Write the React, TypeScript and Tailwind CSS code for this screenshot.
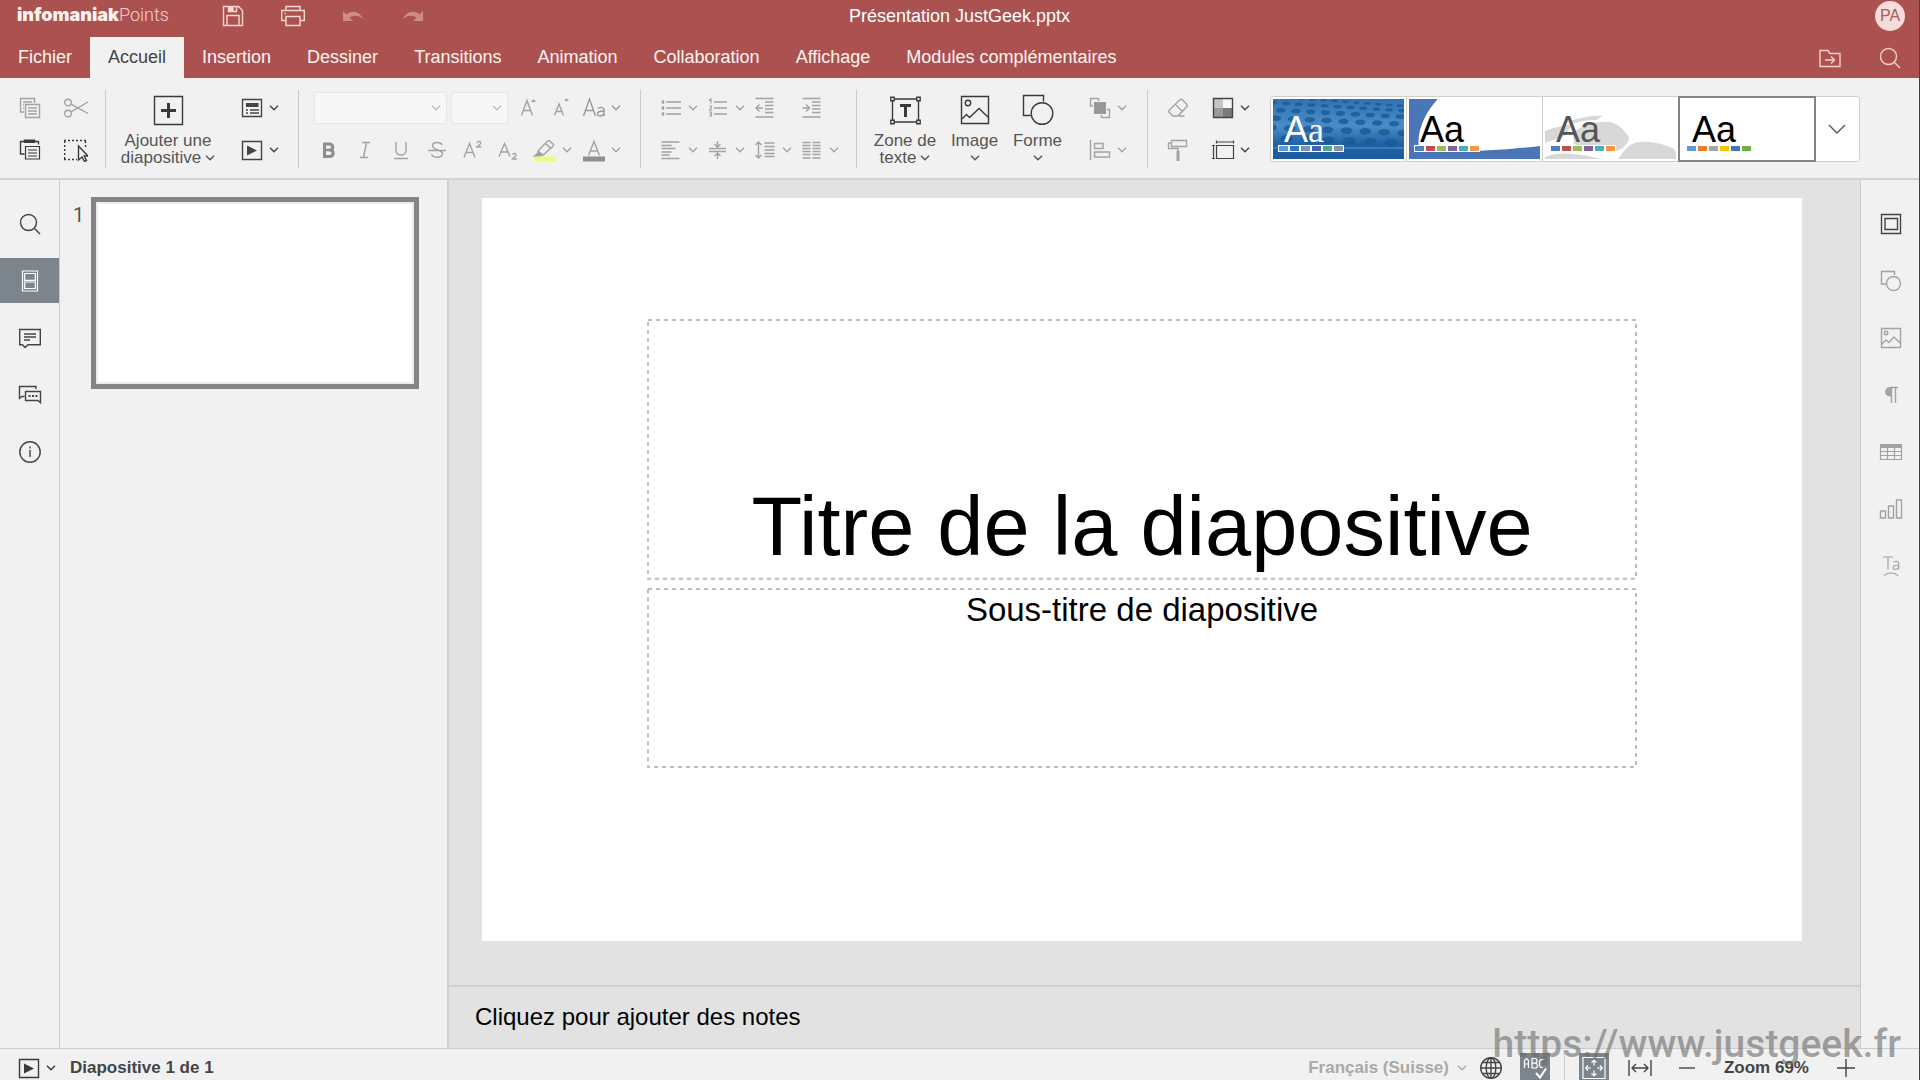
import React from "react";

type IconProps = { size?: number; className?: string; children: React.ReactNode };

function Icon({ size = 24, className = "", children }: IconProps) {
  return (
    <svg
      width={size}
      height={size}
      viewBox={`0 0 ${size} ${size}`}
      fill="none"
      stroke="currentColor"
      strokeWidth="1.4"
      className={`shrink-0 ${className}`}
      aria-hidden="true"
    >
      {children}
    </svg>
  );
}

function Chevron({ className = "" }: { className?: string }) {
  return (
    <svg width="10" height="6" viewBox="0 0 10 6" fill="none" stroke="currentColor" strokeWidth="1.4" className={`shrink-0 ${className}`} aria-hidden="true">
      <path d="M1 .8 5 4.8 9 .8" />
    </svg>
  );
}

const dark = "text-[#444444]";
const dim = "text-[#a3a3a3]";

function Drop({ label, tone = dim, arrow = true, children }: { label: string; tone?: string; arrow?: boolean; children: React.ReactNode }) {
  return (
    <button aria-label={label} className={`flex h-8 w-[39px] shrink-0 items-center gap-[5px] ${tone}`}>
      {children}
      {arrow && <Chevron />}
    </button>
  );
}

function Tool({ label, className, children }: { label: string; className: string; children: React.ReactNode }) {
  return (
    <button aria-label={label} className={`flex h-8 shrink-0 items-center justify-center ${className}`}>
      {children}
    </button>
  );
}

function Separator({ className = "" }: { className?: string }) {
  return <div className={`h-[78px] w-px shrink-0 bg-[#cbcbcb] ${className}`} />;
}

/* ---------- icons ---------- */

const PlayIcon = () => (
  <Icon>
    <path d="M2.5 3.5h19v18h-19z" />
    <path d="M7 7.5v10l10-5z" fill="currentColor" stroke="none" />
  </Icon>
);

const ShapeSmall = () => (
  <Icon>
    <path d="M8 15H2.5V2.500h13v3.500" />
    <circle cx="14.500" cy="14.500" r="7" />
  </Icon>
);

const SearchIcon = () => (
  <Icon>
    <circle cx="10.500" cy="10.500" r="8" />
    <path d="m16.500 16.500 5.500 5.500" />
  </Icon>
);

/* ---------- header ---------- */

const tabs = ["Fichier", "Accueil", "Insertion", "Dessiner", "Transitions", "Animation", "Collaboration", "Affichage", "Modules complémentaires"];

function Header() {
  return (
    <header className="bg-[#ab5251] text-white">
      <div className="grid h-[37px] grid-cols-[1fr_auto_1fr] items-start">
        <div className="flex">
          <div className="flex w-[203px] items-baseline pl-[17px] pt-[2px] leading-[25px]">
            <span className="font-[Inter,sans-serif] text-[18px] font-black text-[#fff3f0]">infomaniak</span>
            <span className="font-[Roboto,sans-serif] text-[18px] font-light text-[#f3cfcb]">Points</span>
          </div>
          <div className="flex text-[#f8d8d2]">
            <Tool label="Enregistrer" className="w-[60px]">
              <Icon>
                <path d="M2.500 2.500h15l4 4v15h-19z" />
                <path d="M6 21v-9.500h12V21M7.500 3v4.500h8V3" />
                <path d="M8 3h4v4H8z" fill="currentColor" />
              </Icon>
            </Tool>
            <Tool label="Imprimer" className="w-[60px]">
              <Icon>
                <path d="M5 16.500H.700v-10h22.600v10H19M5 6V2.500h14V6M5 12.500h14v9H5zM3.500 9.500H5" />
              </Icon>
            </Tool>
            <Tool label="Annuler" className="w-[60px] text-[#cf8b86]">
              <Icon>
                <path d="M2 7v10h10l-3.500-3.200c3.500-3 8.500-3 13.500 1.200-3-7.500-11.500-9.500-16.500-4.500z" fill="currentColor" stroke="none" />
              </Icon>
            </Tool>
            <Tool label="Rétablir" className="w-[60px] text-[#cf8b86]">
              <Icon>
                <path d="M22 7v10H12l3.500-3.200c-3.500-3-8.500-3-13.500 1.200 3-7.500 11.500-9.500 16.500-4.500z" fill="currentColor" stroke="none" />
              </Icon>
            </Tool>
          </div>
        </div>
        <h1 className="text-[18px] leading-8">Présentation JustGeek.pptx</h1>
        <div className="flex justify-end pr-[14px] pt-px">
          <button aria-label="Profil PA" className="flex size-[30px] items-center justify-center rounded-full bg-[#f6dcda] text-[16px] text-[#a55c5b]">
            PA
          </button>
        </div>
      </div>
      <div className="flex h-[41px] items-stretch justify-between">
        <nav className="flex" aria-label="Onglets">
          {tabs.map((t) => (
            <button
              key={t}
              className={t === "Accueil" ? "bg-[#f1f1f1] px-[18px] text-[18px] text-[#444444]" : "px-[18px] text-[18px] text-[#fff3f0]"}
            >
              {t}
            </button>
          ))}
        </nav>
        <div className="flex items-center gap-9 pr-[17px] text-[#f6cfc9]">
          <button aria-label="Ouvrir l'emplacement du fichier">
            <Icon>
              <path d="M2 4.500h8l2 3h10v13H2zM7 14h9.500M13 10.500l3.500 3.500-3.500 3.500" />
            </Icon>
          </button>
          <button aria-label="Rechercher">
            <SearchIcon />
          </button>
        </div>
      </div>
    </header>
  );
}

/* ---------- theme gallery ---------- */

function Swatches({ colors }: { colors: string[] }) {
  return (
    <div className="flex gap-0.5 bg-white p-px">
      {colors.map((c, i) => (
        <span key={i} className="h-[5px] w-[9px]" style={{ backgroundColor: c }} />
      ))}
    </div>
  );
}

const office = ["#4f7fc0", "#c0504d", "#9bbb59", "#8064a2", "#4bacc6", "#f79646"];

const dots: { x: number; y: number; rx: number; ry: number }[] = [];
for (let r = 0; r < 6; r++) {
  for (let c = 0; c < 12; c++) {
    const spread = 11 + r * 2;
    dots.push({
      x: 62 + (c - 5) * spread + r * 3,
      y: 2 + r * 5 + r * r * 0.6 + (c - 5) * 0.8,
      rx: 3.4 + r * 0.6,
      ry: 1.3 + r * 0.5,
    });
  }
}

const themes = [
  {
    name: "Points bleus",
    letter: "text-white",
    serif: true,
    colors: ["#5b9bd5", "#2e75c6", "#7f93ad", "#4a5fa8", "#4fa58f", "#8f8fa3"],
    art: (
      <>
        <defs>
          <linearGradient id="blue" x1="0" y1="0" x2="0" y2="1">
            <stop offset="0" stopColor="#2f73b3" />
            <stop offset=".45" stopColor="#4a8cc7" />
            <stop offset=".75" stopColor="#1d62a6" />
            <stop offset="1" stopColor="#1d5c9c" />
          </linearGradient>
        </defs>
        <path d="M0 0h132v60H0z" fill="url(#blue)" />
        {dots.map((d, i) => (
          <ellipse key={i} cx={d.x} cy={d.y} rx={d.rx} ry={d.ry} fill="#1b5896" opacity=".8" />
        ))}
        <path d="M0 49h132" stroke="#5f97cc" />
      </>
    ),
  },
  {
    name: "Vague bleue",
    letter: "text-black",
    serif: false,
    colors: office,
    art: (
      <>
        <path d="M0 0h132v60H0z" fill="#fff" />
        <path d="M0 0h29C18 12 7 30 10 51 40 54 90 52 132 47v13H0z" fill="#4a76b8" />
      </>
    ),
  },
  {
    name: "Galets gris",
    letter: "text-[#555555]",
    serif: false,
    colors: office,
    art: (
      <>
        <path d="M0 0h132v60H0z" fill="#fff" />
        <path d="M0 32c10-4 20-6 28-7l-8 12L0 44zM25 22c12-4 26-6 33-5l-6 4c-10 0-18 2-26 4zM28 34c10-8 22-12 38-11 8 2 14 8 19 16-2 8-8 12-16 14-18 0-30-4-40-8zM75 58c6-8 10-14 20-15 12-1 26 2 35 7 3 3 2 7 2 10H74zM0 58c12-6 36-4 56 2H0z" fill="#d8d8d8" />
      </>
    ),
  },
  {
    name: "Blanc",
    letter: "text-black",
    serif: false,
    colors: ["#5b9bd5", "#ed7d31", "#a5a5a5", "#ffc000", "#4472c4", "#70ad47"],
    art: <path d="M0 0h132v60H0z" fill="#fff" />,
  },
];

function Gallery() {
  return (
    <div className="ml-5 flex h-[66px] shrink-0 rounded-[3px] border border-[#cfcfcf] bg-white">
      {themes.map((t, i) => (
        <button
          key={t.name}
          aria-label={t.name}
          className={i === 3 ? "relative h-16 w-[136px] outline-2 -outline-offset-1 outline-[#848484]" : "relative h-16 w-[136px] border-r border-[#cfcfcf]"}
        >
          <svg viewBox="0 0 132 60" preserveAspectRatio="none" className="absolute inset-0.5 h-[60px] w-[131px]" aria-hidden="true">
            {t.art}
          </svg>
          <span className={`absolute left-[13px] top-[15px] text-[36px] leading-9 ${t.letter}`}>
            A{t.serif ? <span className="font-['Liberation_Serif',serif]">a</span> : "a"}
          </span>
          <span className="absolute left-[7px] top-12">
            <Swatches colors={t.colors} />
          </span>
        </button>
      ))}
      <button aria-label="Plus de thèmes" className="flex w-[44px] items-center justify-center text-[#555555]">
        <Icon size={18}>
          <path d="m1 5 8 8 8-8" />
        </Icon>
      </button>
    </div>
  );
}

/* ---------- toolbar ---------- */

function BigButton({ icon, first, second, className }: { icon: React.ReactNode; first: string; second?: string; className: string }) {
  return (
    <button className={`flex shrink-0 flex-col items-center pt-1 text-[17px] leading-[17px] text-[#555555] ${className}`}>
      <span className="mb-1.5 text-[#3a3a3a]">{icon}</span>
      <span className="whitespace-nowrap">{first}</span>
      <span className="flex h-[17px] items-center gap-1 whitespace-nowrap">
        {second}
        <Chevron />
      </span>
    </button>
  );
}

function Combo({ label, className }: { label: string; className: string }) {
  return (
    <span className={`relative flex h-8 items-center ${className}`}>
      <select aria-label={label} disabled className="size-full appearance-none rounded-[2px] border border-[#e6e6e6] bg-[#f7f7f7]">
        <option></option>
      </select>
      <Chevron className="pointer-events-none absolute right-1.5 text-[#bdbdbd]" />
    </span>
  );
}

function Toolbar() {
  return (
    <div className="flex h-[102px] shrink-0 overflow-hidden border-b-2 border-[#d3d3d3] bg-[#f1f1f1] pt-3" role="toolbar" aria-label="Accueil">
      <div className="grid shrink-0 grid-cols-[46px_46px] content-start gap-y-2.5 pl-[7px] pt-[2px]">
        <Tool label="Copier" className={dim}>
          <Icon>
            <path d="M6 16H2.500V2.500h14V7M5 6h9M5 9h1M5 12h1" />
            <path d="M7.500 8.500h14v13h-14zM10 12h9M10 15h9M10 18h9" />
          </Icon>
        </Tool>
        <Tool label="Couper" className={dim}>
          <Icon>
            <circle cx="4" cy="6.500" r="3.300" />
            <circle cx="4" cy="17.500" r="3.300" />
            <path d="m7 8.200 17 9.300M7 15.800 24 6" />
          </Icon>
        </Tool>
        <Tool label="Coller" className="text-[#3a3a3a]">
          <Icon>
            <path d="M6.500 16h-4V3.500H20.500V6.500" />
            <path d="M6.500 2.200h10v2h-10z" fill="currentColor" />
            <path d="M7.500 8.500h14v12.500h-14zM10 12h9M10 15h9M10 18h9" strokeWidth="1.200" />
          </Icon>
        </Tool>
        <Tool label="Tout sélectionner" className="text-[#3a3a3a]">
          <Icon>
            <path d="M0 2.500h22M0 21.500h13M.700 3v18M21.500 3v6" strokeDasharray="2 2" />
            <path d="M14.500 8v14l3.500-3 2.500 4.500 2-1-2.300-4.500H24z" fill="#f1f1f1" />
          </Icon>
        </Tool>
      </div>
      <Separator className="ml-1.5" />

      <BigButton
        className="ml-1.5 w-[112px]"
        first="Ajouter une"
        second="diapositive"
        icon={
          <Icon size={32}>
            <path d="M2.500 2.500h28v28h-28z" />
            <path d="M16.500 9v15M9 16.500h15" strokeWidth="3" />
          </Icon>
        }
      />
      <div className="ml-4 flex shrink-0 flex-col gap-2.5 pt-[2px]">
        <Drop label="Disposition" tone={dark}>
          <Icon>
            <path d="M2.500 3.500h19v17h-19zM6 14h2M10 14h9M6 17h2M10 17h9" />
            <path d="M6 7h12.500v4H6z" fill="currentColor" stroke="none" />
          </Icon>
        </Drop>
        <Drop label="Démarrer le diaporama" tone={dark}>
          <PlayIcon />
        </Drop>
      </div>
      <Separator className="ml-[19px]" />

      <div className={`ml-3 flex shrink-0 flex-col gap-2.5 pt-[2px] ${dim}`}>
        <div className="flex pl-[3px]">
          <Combo label="Police" className="w-[133px]" />
          <Combo label="Taille de police" className="ml-1 mr-[5px] w-[57px]" />
          <Tool label="Augmenter la taille" className="w-8">
            <Icon>
              <path d="m4.500 19.500 5.500-15 5.500 15M6.200 14.500h7.500" />
              <path d="m14 6 2.500-3L19 6z" fill="currentColor" stroke="none" />
            </Icon>
          </Tool>
          <Tool label="Réduire la taille" className="w-8">
            <Icon>
              <path d="m5.500 19.500 4.500-11.500 4.500 11.500M7 15.500h6" />
              <path d="m15 3 2.500 3L20 3z" fill="currentColor" stroke="none" />
            </Icon>
          </Tool>
          <div className="ml-[5px]">
            <Drop label="Modifier la casse" tone="text-[#999999]">
              <Icon>
                <path d="m1.500 20 6-17 6 17M3.500 14.500h8" />
                <path d="M16 12.500c3-2 6-1 6 1.500v6M22 15c-5 0-6.500 1-6.500 2.800 0 3 5 2.800 6.500-.300" />
              </Icon>
            </Drop>
          </div>
        </div>
        <div className="flex">
          <Tool label="Gras" className="w-9 text-[#8d8d8d]">
            <Icon>
              <path d="M7.500 6v12.500h4.800c5 0 5-6.200.700-6.500 4-.700 3.600-6-1-6z" strokeWidth="3" />
              <path d="M8 12h5" strokeWidth="2.500" />
            </Icon>
          </Tool>
          <Tool label="Italique" className="w-9">
            <Icon>
              <path d="M9 4.500h8M7 19.500h8M13.500 4.500l-3 15" />
            </Icon>
          </Tool>
          <Tool label="Souligné" className="w-9">
            <Icon>
              <path d="M7 4v8.500c0 6 10 6 10 0V4M5 20.500h14" />
            </Icon>
          </Tool>
          <Tool label="Barré" className="w-9">
            <Icon>
              <path d="M17 7c-1-3.500-9.500-3.500-9.500.800 0 5.200 10 3.200 10 8 0 4.500-9.500 4.700-11 .500M3 12.500h18" />
            </Icon>
          </Tool>
          <Tool label="Exposant" className="w-9">
            <Icon>
              <path d="m3 19.500 5.500-14 5.500 14M5 14.500h7M16 5c.500-2.500 4-2 3.500.300-.300 1.300-2.500 2.500-3.500 3.700h4.500" />
            </Icon>
          </Tool>
          <Tool label="Indice" className="w-9">
            <Icon>
              <path d="m2 18.500 5.500-13 5.500 13M4 14h7M15.500 17c.500-2.500 4-2 3.500.300-.300 1.300-2.500 2.500-3.500 3.700H20" />
            </Icon>
          </Tool>
          <div className="ml-1.5 flex gap-2.5">
            <Drop label="Surlignage">
              <Icon>
                <path d="M1 18.500h22v5H1z" fill="#eef97f" stroke="none" />
                <path d="m5 13 9.500-10 1.500-.500 4.500 4-.500 1.800L10 17l-5 .500zM12.500 5.500 17.500 10M5 13l5 4" />
                <path d="m1.500 18 4-3.500 3 3z" fill="currentColor" />
              </Icon>
            </Drop>
            <Drop label="Couleur de police">
              <Icon>
                <path d="M1 18.500h22v5H1z" fill="#8f8f8f" stroke="none" />
                <path d="m6.500 17.500 5.500-14 5.500 14M8.500 13h7" />
              </Icon>
            </Drop>
          </div>
        </div>
      </div>
      <Separator className="ml-[19px]" />

      <div className="ml-[18px] grid shrink-0 grid-cols-4 content-start gap-x-2 gap-y-2.5 pt-[2px]">
        <Drop label="Puces">
          <Icon>
            <path d="M7 6h15M7 12h15M7 18h15" />
            <path d="M3.500 5h1v2h-1zM3.500 11h1v2h-1zM3.500 17h1v2h-1z" fill="currentColor" />
          </Icon>
        </Drop>
        <Drop label="Numérotation">
          <Icon>
            <path d="M8 6h13M8 12h13M8 18h13" />
            <path d="M3 4.500 5 3v4.500M3 10h2.500v1.500L3.500 14H6M3 16h2.500v4H3M3.500 18h2" strokeWidth="1.200" />
          </Icon>
        </Drop>
        <Drop label="Réduire le retrait" arrow={false}>
          <Icon>
            <path d="M2.500 2.500h18M12 6h8.500M12 9.500h8.500M12 13h8.500M12 16.500h8.500M2.500 21h18M3 12h7M6.500 8.500 3 12l3.500 3.500" />
          </Icon>
        </Drop>
        <Drop label="Augmenter le retrait" arrow={false}>
          <Icon>
            <path d="M2.500 2.500h18M12 6h8.500M12 9.500h8.500M12 13h8.500M12 16.500h8.500M2.500 21h18M2.500 12h7M6 8.500 9.500 12 6 15.500" />
          </Icon>
        </Drop>
        <Drop label="Alignement horizontal">
          <Icon>
            <path d="M2.500 4h18M2.500 7.500h10M2.500 10.500h14M2.500 14h10M2.500 17h8M2.500 20.500h18" />
          </Icon>
        </Drop>
        <Drop label="Alignement vertical">
          <Icon>
            <path d="M3 10.500h17M3 13.500h17M11.500 3v6M8.500 6l3 3 3-3M11.500 21v-6M8.500 18l3-3 3 3" />
          </Icon>
        </Drop>
        <Drop label="Interligne">
          <Icon>
            <path d="M11.500 5h10M11.500 8.500h10M11.500 12h10M11.500 15.500h10M5.500 4v16M2.500 7l3-3 3 3M2.500 17l3 3 3-3M11.500 18.500h10" />
          </Icon>
        </Drop>
        <Drop label="Colonnes">
          <Icon>
            <path d="M2.500 4.500h8M2.500 7.500h8M2.500 10.500h8M2.500 13.500h8M2.500 16.500h8M2.500 20h8M12.500 4.500h8M12.500 7.500h8M12.500 10.500h8M12.500 13.500h8M12.500 16.500h8M12.500 20h8" />
          </Icon>
        </Drop>
      </div>
      <Separator className="ml-[17px]" />

      <BigButton
        className="ml-[13px] w-[70px]"
        first="Zone de"
        second="texte"
        icon={
          <Icon size={32}>
            <path d="M3.500 5h26v23h-26z" />
            <path d="M1.800 3.300h3.400v3.400H1.800zM27.800 3.300h3.400v3.400h-3.400zM1.800 26.300h3.400v3.400H1.800zM27.800 26.300h3.400v3.400h-3.400z" fill="#f1f1f1" />
            <path d="M11 11.500h11M16.500 11v12" strokeWidth="3" />
          </Icon>
        }
      />
      <BigButton
        className="ml-[3px] w-[63px]"
        first="Image"
        icon={
          <Icon size={32}>
            <path d="M2.500 2.500h27v27h-27z" />
            <circle cx="9" cy="9" r="2.700" />
            <path d="m3 25 4.500-4.500 3 3L20 14.500l9.500 9" />
          </Icon>
        }
      />
      <BigButton
        className="w-[63px]"
        first="Forme"
        icon={
          <Icon size={32}>
            <path d="M8.500 21.500H1.500v-20h20v6" />
            <circle cx="20" cy="19.500" r="10.800" />
          </Icon>
        }
      />
      <div className="ml-[19px] flex shrink-0 flex-col gap-2.5 pt-[2px]">
        <Drop label="Organiser">
          <Icon>
            <path d="M5 10H2.500V2.500h8V5M19 13.500h2.500v8h-8V19" />
            <path d="M6 6h12v12H6z" fill="#999999" stroke="none" />
          </Icon>
        </Drop>
        <Drop label="Aligner">
          <Icon>
            <path d="M2.500 2v20M6.500 5.500h8.500v5H6.500zM6.500 14h15v5h-15z" />
          </Icon>
        </Drop>
      </div>
      <Separator className="ml-5" />

      <div className={`ml-[18px] flex shrink-0 flex-col gap-2.5 pt-[2px] ${dim}`}>
        <Tool label="Effacer" className="w-6">
          <Icon>
            <path d="m3 14.500 10.500-10.500c1.500-1.200 2-1 3 0l4 4c1 1.200 1 2 0 3L12 20H7l-4-4c-.500-.700-.500-1 0-1.500zM9.500 8.500l7 7M7 20h11.500" />
          </Icon>
        </Tool>
        <Tool label="Copier le style" className="w-6">
          <Icon>
            <path d="M5.500 2.500h15v6h-15zM5.500 5h-3v5.500h9.500V13" />
            <path d="M10.500 13h3v10h-3z" fill="currentColor" stroke="none" />
          </Icon>
        </Tool>
      </div>
      <div className="ml-[21px] flex shrink-0 flex-col gap-2.5 pt-[2px]">
        <Drop label="Jeu de couleurs" tone={dark}>
          <Icon>
            <path d="M3 3h9v9H3z" fill="#c4c4c4" stroke="none" />
            <path d="M12 3h9v9h-9z" fill="#f7f7f7" stroke="none" />
            <path d="M3 12h9v9H3z" fill="#9b9b9b" stroke="none" />
            <path d="M12 12h9v9h-9z" fill="#7a7a7a" stroke="none" />
            <path d="M2.500 2.500h19v19h-19z" />
          </Icon>
        </Drop>
        <Drop label="Taille de diapositive" tone={dark}>
          <Icon>
            <path d="M5.500 7.500h17v13h-17zM5.500 4h17M5.500 2.500v3M22.500 2.500v3M2.500 7.500v13M1 7.500h3M1 20.500h3" strokeWidth="1.200" />
          </Icon>
        </Drop>
      </div>
      <div className="pt-1.5">
        <Gallery />
      </div>
    </div>
  );
}

/* ---------- side rails ---------- */

const leftItems = [
  { label: "Rechercher", icon: <SearchIcon /> },
  {
    label: "Diapositives",
    active: true,
    icon: (
      <Icon>
        <path d="M4.500 2h15v20h-15zM6.700 4.500h10.600v6.800H6.700zM6.700 13h10.600v6.500H6.700z" strokeWidth="1.200" />
      </Icon>
    ),
  },
  {
    label: "Commentaires",
    icon: (
      <Icon>
        <path d="M1.700 3.500h20.600v15.200H10l-2.800 2.800-2.800-2.800H1.700zM6 8h12M6 11h12M6 14h6" />
      </Icon>
    ),
  },
  {
    label: "Discussion",
    icon: (
      <Icon>
        <path d="M18 6V3.500H1.500v11.800L4 13.500h2.500" />
        <path d="M7.500 8.500h15v11.200L20 17.500H7.500z" />
        <path d="M10.500 13h2M14 13h2M17.500 13h2" strokeWidth="2" />
      </Icon>
    ),
  },
  {
    label: "À propos",
    icon: (
      <Icon>
        <circle cx="12" cy="12" r="10.200" />
        <path d="M12 10v7M12 6.500V8.500" />
      </Icon>
    ),
  },
];

const rightItems = [
  {
    label: "Paramètres de la diapositive",
    tone: dark,
    icon: (
      <Icon>
        <path d="M2.500 2.500h19v19h-19zM6 6.500h12.500v11H6z" />
      </Icon>
    ),
  },
  { label: "Paramètres de la forme", tone: dim, icon: <ShapeSmall /> },
  {
    label: "Paramètres de l'image",
    tone: dim,
    icon: (
      <Icon>
        <path d="M2.500 2.500h19v19h-19zM3 18l4-4 3 2.500 5-5.500 6.500 6.500" />
        <circle cx="7" cy="7" r="1.800" />
      </Icon>
    ),
  },
  {
    label: "Paramètres du paragraphe",
    tone: dim,
    icon: (
      <Icon>
        <path d="M12.500 4v16M16.500 4v16M11 4.500h8" />
        <path d="M12.500 4H11c-6.500 0-6.500 9.500 0 9.500h1.500z" fill="currentColor" stroke="none" />
      </Icon>
    ),
  },
  {
    label: "Paramètres du tableau",
    tone: dim,
    icon: (
      <Icon>
        <path d="M1 4h22v4H1z" fill="currentColor" stroke="none" />
        <path d="M1.500 5h21v14.500h-21zM8.500 8v11.500M15.500 8v11.500M1.500 11.500h21M1.500 15.500h21" strokeWidth="1.200" />
      </Icon>
    ),
  },
  {
    label: "Paramètres du graphique",
    tone: dim,
    icon: (
      <Icon>
        <path d="M1.500 14h5v7h-5zM9.500 9h5v12h-5zM17.500 3h5v18h-5z" />
      </Icon>
    ),
  },
  {
    label: "Paramètres de Text Art",
    tone: dim,
    icon: (
      <Icon>
        <path d="M4 3h10M9 3v12.500M14.500 8c2-1.300 5.200-1 5.200 1.500v6M19.700 11c-4 0-5.500.800-5.500 2.500 0 2.700 4.500 2.400 5.500-.500M5 22c3-4 11-4 14 0" strokeWidth="1.200" />
      </Icon>
    ),
  },
];

function LeftRail() {
  return (
    <nav className="flex w-[60px] shrink-0 flex-col gap-3 border-r border-[#cbcbcb] pt-[21px]" aria-label="Panneaux">
      {leftItems.map((it) => (
        <button
          key={it.label}
          aria-label={it.label}
          className={it.active ? "flex h-[45px] items-center justify-center bg-[#7d858c] text-white" : "flex h-[45px] items-center justify-center text-[#444444]"}
        >
          {it.icon}
        </button>
      ))}
    </nav>
  );
}

function RightRail() {
  return (
    <nav className="flex w-[59px] shrink-0 flex-col gap-3 border-l border-[#cbcbcb] pl-0.5 pt-[21px]" aria-label="Paramètres">
      {rightItems.map((it) => (
        <button key={it.label} aria-label={it.label} className={`flex h-[45px] items-center justify-center ${it.tone}`}>
          {it.icon}
        </button>
      ))}
    </nav>
  );
}

function DashedFrame() {
  return (
    <svg className="absolute inset-0 size-full" fill="none" aria-hidden="true">
      <rect x="1" y="1" width="100%" height="100%" className="h-[calc(100%-2px)] w-[calc(100%-2px)]" stroke="#bdbdbd" strokeWidth="2" strokeDasharray="4 4" />
    </svg>
  );
}

/* ---------- status bar ---------- */

function StatusBar() {
  return (
    <footer className="h-8 shrink-0 overflow-hidden border-t border-[#cbcbcb] text-[17px] font-bold text-[#444444]">
      <div className="flex h-[38px] items-center justify-between">
        <div className="flex items-center pl-[17px]">
          <button aria-label="Diaporama" className="flex items-center gap-[5px] text-[#3a3a3a]">
            <PlayIcon />
            <Chevron />
          </button>
          <span className="ml-[14px]">Diapositive 1 de 1</span>
        </div>
        <div className="flex items-center pr-[61px]">
          <button className="flex items-center gap-2 text-[#a9a9a9]">
            Français (Suisse)
            <Chevron />
          </button>
          <button aria-label="Langue du document" className="ml-3">
            <Icon>
              <circle cx="12" cy="12" r="10.300" />
              <ellipse cx="12" cy="12" rx="4.800" ry="10.300" />
              <path d="M12 1.500v21M1.500 12h21M3.200 6.500h17.600M3.200 17.500h17.600" />
            </Icon>
          </button>
          <button aria-label="Vérification de l'orthographe" className="ml-[17px] flex size-[30px] items-center justify-center bg-[#7d858c] text-white">
            <Icon>
              <path d="M1.500 12V4.500l2-2 2 2V12M1.500 8h4M9 2.500v9.500h3.500c2.500 0 2.500-4.500 0-4.800 2-.500 2-4.700-.300-4.700zM9 7.200h3.500M21.500 3.500h-3.500l-1.500 1.500v5l1.500 1.500h2" strokeWidth="1.200" />
              <path d="m13 17 4 4.500 6-9" strokeWidth="2" />
            </Icon>
          </button>
          <div className="ml-3.5 h-[30px] w-px bg-[#cbcbcb]" />
          <button aria-label="Ajuster à la diapositive" className="ml-3.5 flex size-[30px] items-center justify-center bg-[#7d858c] text-white">
            <Icon>
              <path d="M1 1.500h22v21H1zM12 4.500v5M9.500 6.500 12 4.200l2.500 2.300M12 19.500v-5M9.500 17.500l2.500 2.300 2.500-2.300M4 12h5M6 9.500 3.700 12 6 14.500M20 12h-5M18 9.500l2.300 2.500-2.300 2.500" strokeWidth="1.200" />
            </Icon>
          </button>
          <button aria-label="Ajuster à la largeur" className="ml-[19px]">
            <Icon>
              <path d="M1 4v16M23 4v16M4 12h16M8 8l-4 4 4 4M16 8l4 4-4 4" />
            </Icon>
          </button>
          <button aria-label="Zoom arrière" className="ml-[23px]">
            <Icon>
              <path d="M4 12h16" />
            </Icon>
          </button>
          <span className="mx-[25px]">Zoom 69%</span>
          <button aria-label="Zoom avant">
            <Icon>
              <path d="M3 12h18M12 3v18" />
            </Icon>
          </button>
        </div>
      </div>
    </footer>
  );
}

export default function App() {
  return (
    <div className="relative flex h-screen flex-col overflow-hidden border-r border-[#444444] bg-[#f1f1f1] font-['Liberation_Sans',Arial,sans-serif]">
      <Header />
      <Toolbar />
      <div className="flex min-h-0 flex-1">
        <LeftRail />
        <aside className="flex w-[387px] shrink-0 items-start gap-1.5 pl-[13px] pt-[17px]">
          <span className="w-3 font-[Roboto,sans-serif] text-[20px] leading-9 text-[#555555]">1</span>
          <button aria-label="Diapositive 1" className="aspect-[328/192] w-[328px] border-[5px] border-[#858585] bg-white shadow-[inset_0_0_0_2px_#ececec]" />
        </aside>
        <main className="flex min-w-0 flex-1 flex-col border-l-2 border-[#cfcfcf] bg-[#e2e2e2]">
          <div className="min-h-0 flex-1 overflow-hidden pl-[33px] pr-[58px] pt-[18px]">
            <section className="flex aspect-video w-full flex-col bg-white px-[12.5%] pt-[9.2%]">
              <div className="relative flex h-[42%] items-end justify-center">
                <DashedFrame />
                <h2 className="whitespace-nowrap pb-[7px] text-[83px] leading-[92px] text-black">Titre de la diapositive</h2>
              </div>
              <div className="relative mt-2 flex h-[29%] justify-center">
                <DashedFrame />
                <p className="whitespace-nowrap pt-1 text-[33px] leading-9 text-black">Sous-titre de diapositive</p>
              </div>
            </section>
          </div>
          <div className="flex h-[63px] shrink-0 items-center border-t-2 border-[#cfcfcf] pb-px pl-[26px] text-[24px] text-black">Cliquez pour ajouter des notes</div>
        </main>
        <RightRail />
      </div>
      <StatusBar />
      <div className="pointer-events-none absolute bottom-3 right-[18px] font-[Roboto,sans-serif] text-[39px] font-medium leading-[48px] text-[#6b6b6b]/60">https://www.justgeek.fr</div>
    </div>
  );
}
